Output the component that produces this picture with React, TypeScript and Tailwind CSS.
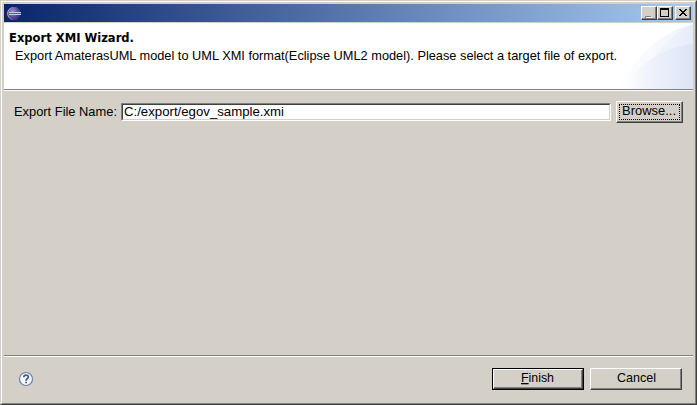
import type { ReactNode } from 'react';

const raised =
  'border border-t-white border-l-white border-r-[#404040] border-b-[#404040] shadow-[inset_-1px_-1px_0_#808080] bg-[#d4d0c8]';

function EclipseLogo() {
  return (
    <svg width="16" height="16" viewBox="0 0 16 16" className="block shrink-0">
      <defs>
        <radialGradient id="orb" cx="0.35" cy="0.35" r="0.7">
          <stop offset="0" stopColor="#9a92cc" />
          <stop offset="0.5" stopColor="#655aa2" />
          <stop offset="1" stopColor="#2b2a72" />
        </radialGradient>
      </defs>
      <circle cx="7.6" cy="7.5" r="6.5" fill="#d7a5b4" />
      <circle cx="8.4" cy="7.5" r="6.4" fill="url(#orb)" />
      <path d="M3 6.5H15M3 8.5H15" stroke="#b9cdec" />
      <path d="M3 7.5H15" stroke="#5361a0" />
    </svg>
  );
}

function TitleButton({ label, children }: { label: string; children: ReactNode }) {
  return (
    <button aria-label={label} className={`${raised} h-[14px] w-4 shrink-0`}>
      <svg width="14" height="12" viewBox="0 0 14 12" shapeRendering="crispEdges" className="block">
        {children}
      </svg>
    </button>
  );
}

function Label({ width, children }: { width: number; children: ReactNode }) {
  return (
    <svg width={width} height="18" className="block shrink-0 overflow-visible">
      <text x="0" y="13" textLength={width} lengthAdjust="spacingAndGlyphs" fill="#000">
        {children}
      </text>
    </svg>
  );
}

export default function App() {
  return (
    <div className="h-[405px] w-[697px] overflow-hidden border-t border-r border-b border-l border-t-[#d4d0c8] border-l-[#d4d0c8] border-r-[#404040] border-b-[#404040] bg-[#d4d0c8] font-['Liberation_Sans',sans-serif] text-[13px] leading-[18px] text-black">
      <div className="flex h-full flex-col border border-t-white border-l-white border-r-[#808080] border-b-[#808080] p-0.5">
        <div className="flex h-[18px] shrink-0 items-start bg-linear-to-r/srgb from-[#0a246a] to-[#a6caf0] pt-0.5 pr-0.5 pl-[2px]">
          <EclipseLogo />
          <div className="flex-1" />
          <TitleButton label="Minimize">
            <path d="M3 9h6v2h-6z" fill="#808080" />
            <path d="M4 10h6v1h-6z" fill="#fff" />
          </TitleButton>
          <TitleButton label="Maximize">
            <path d="M2 1h9v9H2zM3 3v6h7V3z" fill="#000" fillRule="evenodd" />
          </TitleButton>
          <div className="w-0.5" />
          <TitleButton label="Close">
            <path
              d="M3 2h2v1h1v1h2V3h1V2h2v1h-1v1H9v1H8v1h1v1h1v1h1v1H9V8H8V7H6v1H5v1H3V8h1V7h1V6h1V5H5V4H4V3H3z"
              fill="#000"
            />
          </TitleButton>
        </div>

        <div className="mt-px flex h-[68px] shrink-0 justify-between border-b border-white bg-white shadow-[inset_0_-1px_0_#808080]">
          <div className="pt-[6px] pl-[5px]">
            <div className="font-['DejaVu_Sans_Condensed','DejaVu_Sans',sans-serif] text-[12px] font-bold">
              <Label width={125}>Export XMI Wizard.</Label>
            </div>
            <div className="pl-[6px]">
              <Label width={602}>
                Export AmaterasUML model to UML XMI format(Eclipse UML2 model). Please select a target file of export.
              </Label>
            </div>
          </div>
          <svg width="75" height="66" viewBox="0 0 75 66" className="block shrink-0">
            <defs>
              <linearGradient id="outer">
                <stop offset="0" stopColor="#fff" />
                <stop offset="1" stopColor="#e6ecfa" />
              </linearGradient>
              <linearGradient id="inner">
                <stop offset="0" stopColor="#fff" />
                <stop offset="0.45" stopColor="#edf1fb" />
                <stop offset="1" stopColor="#dde4f6" />
              </linearGradient>
            </defs>
            <path d="M0 66C14 36 44 8 75 1V66Z" fill="url(#outer)" />
            <path d="M0 66C14 36 44 8 75 1C58 9 43 23 34 38Z" fill="#fff" fillOpacity="0.35" />
            <path d="M4 66C22 39 47 24 75 21V66Z" fill="url(#inner)" />
          </svg>
        </div>

        <div className="flex h-[264px] shrink-0 items-start pt-[10px] pl-[10px]">
          <div className="pt-[2px]">
            <Label width={103}>Export File Name:</Label>
          </div>
          <div className="mt-[2px] ml-1 h-[18px] w-[490px] border border-t-[#808080] border-l-[#808080] border-r-white border-b-white">
            <div className="h-4 border border-t-[#404040] border-l-[#404040] border-r-[#d4d0c8] border-b-[#d4d0c8] bg-white">
              <div className="-mt-[2px] pl-px">
                <Label width={160}>C:/export/egov_sample.xmi</Label>
              </div>
            </div>
          </div>
          <button className={`${raised} ml-[5px] h-[22px] w-[67px] p-[2px]`}>
            <div className="flex h-4 w-[61px] border border-dotted border-black pl-[2px]">
              <div className="-mt-[3px]">
                <Label width={54}>Browse...</Label>
              </div>
            </div>
          </button>
        </div>

        <div className="flex flex-1 items-start border-t border-[#808080] pr-[11px] pl-[14px] shadow-[inset_0_1px_0_#fff]">
          <svg width="16" height="16" viewBox="0 0 16 16" className="mt-[15px] block">
            <circle cx="8" cy="8" r="6.5" fill="#f6f8fc" stroke="#6980a3" strokeWidth="1.2" />
            <path
              d="M5.8 6.2C5.8 3.4 10.3 3.4 10.3 6C10.3 7.7 8.1 7.7 8.1 9.7M8.1 10.7V12.3"
              fill="none"
              stroke="#435d8b"
              strokeWidth="1.8"
            />
          </svg>
          <div className="flex-1" />
          <button className="mt-3 h-[22px] w-[92px] border border-black">
            <div className={`${raised} flex h-5 justify-center pr-[2px]`}>
              <div className="-mt-px">
                <Label width={33}>
                  <tspan className="underline">F</tspan>inish
                </Label>
              </div>
            </div>
          </button>
          <button className={`${raised} mt-3 ml-1.5 flex h-[22px] w-[92px] justify-center`}>
            <Label width={39}>Cancel</Label>
          </button>
        </div>
      </div>
    </div>
  );
}
